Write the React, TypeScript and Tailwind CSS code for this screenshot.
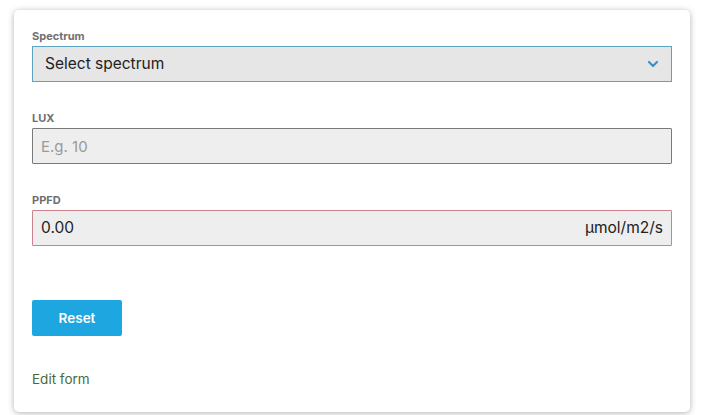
import { useState } from 'react'

export default function App() {
  const [spectrum, setSpectrum] = useState('')
  const [lux, setLux] = useState('')

  return (
    <div className="min-h-screen bg-white pt-[10px] pl-[14px] pr-[21px] font-['Inter',sans-serif]">
      <div className="w-[676px] h-[402px] bg-white rounded-[5px] shadow-[0_1px_6px_rgba(0,0,0,0.3)] px-[18px] pt-[18px]">
        {/* spectrum */}
        <label className="block text-[11px] font-bold text-[#6f6f6f] leading-[16px]">Spectrum</label>
        <div className="relative mt-[2px] h-[36px] border border-[#5ba3c1] bg-[#e6e6e6]">
          <select
            value={spectrum}
            onChange={(e) => setSpectrum(e.target.value)}
            className="appearance-none w-full h-full bg-transparent pl-[12px] text-[15.5px] text-[#222] outline-none"
          >
            <option value="">Select spectrum</option>
          </select>
          <svg className="absolute right-[12px] top-[12px] pointer-events-none" width="12" height="10" viewBox="0 0 12 10">
            <path d="M2 3l4 4 4-4" fill="none" stroke="#3b93c4" strokeWidth="2.2" strokeLinecap="round" strokeLinejoin="round" />
          </svg>
        </div>

        {/* lux */}
        <label className="block mt-[28px] text-[11px] font-bold text-[#6f6f6f] leading-[16px]">LUX</label>
        <input
          value={lux}
          onChange={(e) => setLux(e.target.value)}
          placeholder="E.g. 10"
          className="block mt-[2px] w-full h-[36px] border border-[#7a7a7a] bg-[#eeeeee] px-[8px] text-[15px] text-[#222] placeholder:text-[#9a9a9a] outline-none rounded-[1px]"
        />

        {/* ppfd */}
        <label className="block mt-[28px] text-[11px] font-bold text-[#6f6f6f] leading-[16px]">PPFD</label>
        <div className="mt-[2px] h-[36px] flex items-center justify-between border border-[#c9838d] bg-[#eeeeee] px-[8px] rounded-[1px]">
          <span className="text-[15.5px] text-[#222]">0.00</span>
          <span className="text-[15.5px] text-[#222]">µmol/m2/s</span>
        </div>

        <button className="mt-[54px] w-[90px] h-[36px] rounded-[2px] bg-[#1ea6e0] text-white text-[13.5px] font-semibold">
          Reset
        </button>

        <div className="mt-[33px] text-[13.5px] text-[#4a6a38]">Edit form</div>
      </div>
    </div>
  )
}
